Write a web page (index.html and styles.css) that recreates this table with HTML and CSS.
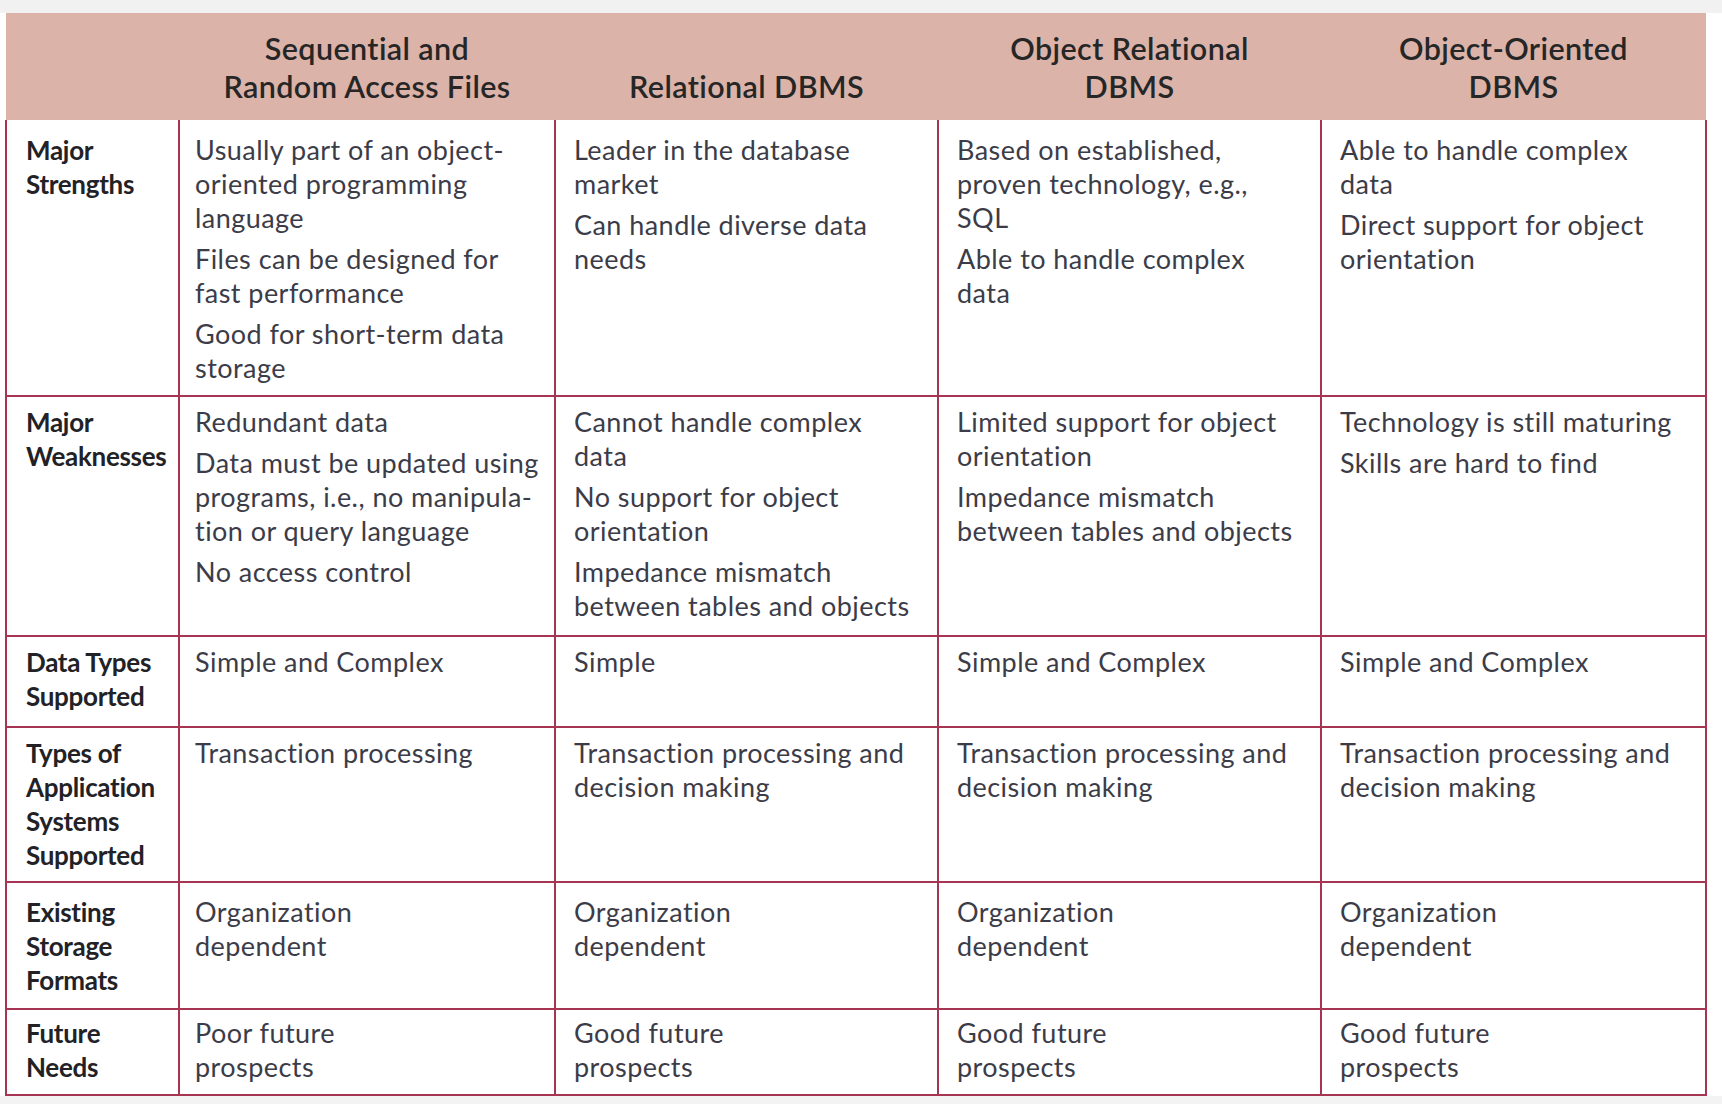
FILE: index.html
```html
<!DOCTYPE html>
<html lang="en">
<head>
<meta charset="utf-8">
<title>Comparison of File and DBMS Types</title>
<link rel="stylesheet" href="styles.css">
</head>
<body>
<div class="topstrip"></div>
<div class="wrap">
<table class="cmp">
  <colgroup>
    <col class="c-label">
    <col class="c-seq">
    <col class="c-rel">
    <col class="c-orel">
    <col class="c-oo">
  </colgroup>
  <thead>
    <tr class="r-head">
      <th></th>
      <th>Sequential and<br>Random Access Files</th>
      <th>Relational DBMS</th>
      <th>Object Relational<br>DBMS</th>
      <th>Object-Oriented<br>DBMS</th>
    </tr>
  </thead>
  <tbody>
    <tr class="r-str">
      <th>Major<br>Strengths</th>
      <td class="first"><p>Usually part of an object-<br>oriented programming<br>language</p><p>Files can be designed for<br>fast performance</p><p>Good for short-term data<br>storage</p></td>
      <td><p>Leader in the database<br>market</p><p>Can handle diverse data<br>needs</p></td>
      <td><p>Based on established,<br>proven technology, e.g.,<br>SQL</p><p>Able to handle complex<br>data</p></td>
      <td><p>Able to handle complex<br>data</p><p>Direct support for object<br>orientation</p></td>
    </tr>
    <tr class="r-weak">
      <th>Major<br>Weaknesses</th>
      <td class="first"><p>Redundant data</p><p>Data must be updated using<br>programs, i.e., no manipula-<br>tion or query language</p><p>No access control</p></td>
      <td><p>Cannot handle complex<br>data</p><p>No support for object<br>orientation</p><p>Impedance mismatch<br>between tables and objects</p></td>
      <td><p>Limited support for object<br>orientation</p><p>Impedance mismatch<br>between tables and objects</p></td>
      <td><p>Technology is still maturing</p><p>Skills are hard to find</p></td>
    </tr>
    <tr class="r-types">
      <th>Data Types<br>Supported</th>
      <td class="first"><p>Simple and Complex</p></td>
      <td><p>Simple</p></td>
      <td><p>Simple and Complex</p></td>
      <td><p>Simple and Complex</p></td>
    </tr>
    <tr class="r-app">
      <th>Types of<br>Application<br>Systems<br>Supported</th>
      <td class="first"><p>Transaction processing</p></td>
      <td><p>Transaction processing and<br>decision making</p></td>
      <td><p>Transaction processing and<br>decision making</p></td>
      <td><p>Transaction processing and<br>decision making</p></td>
    </tr>
    <tr class="r-store">
      <th>Existing<br>Storage<br>Formats</th>
      <td class="first"><p>Organization<br>dependent</p></td>
      <td><p>Organization<br>dependent</p></td>
      <td><p>Organization<br>dependent</p></td>
      <td><p>Organization<br>dependent</p></td>
    </tr>
    <tr class="r-future">
      <th>Future<br>Needs</th>
      <td class="first"><p>Poor future<br>prospects</p></td>
      <td><p>Good future<br>prospects</p></td>
      <td><p>Good future<br>prospects</p></td>
      <td><p>Good future<br>prospects</p></td>
    </tr>
  </tbody>
</table>
</div>
<div class="bottomstrip"></div>
</body>
</html>
```

FILE: styles.css
```css
html, body {
  margin: 0;
  padding: 0;
  background: #ffffff;
}

body {
  width: 1722px;
  height: 1104px;
  overflow: hidden;
  display: flex;
  flex-direction: column;
  font-family: Lato, "Open Sans", "Liberation Sans", sans-serif;
  color: #3c3c48;
}

.topstrip {
  height: 13px;
  background: #f1f1f1;
  flex: none;
}

.wrap {
  padding-left: 5px;
  flex: none;
}

.bottomstrip {
  flex: 1;
  background: #f3f3f3;
}

.cmp {
  border-collapse: collapse;
  table-layout: fixed;
  width: 1700px;
}

.c-label { width: 173px; }
.c-seq { width: 376px; }
.c-rel { width: 383px; }
.c-orel { width: 383px; }
.c-oo { width: 385px; }

.r-head { height: 107px; }

.r-head th {
  background: #dbb3a9;
  padding: 0 0 15px 0;
  vertical-align: bottom;
  text-align: center;
  font-size: 30.5px;
  line-height: 38px;
  font-weight: 600;
  color: #262626;
  letter-spacing: 0.4px;
  border: none;
}

tbody th,
tbody td {
  border: 2px solid #a53552;
  border-top: none;
  vertical-align: top;
  text-align: left;
  padding-bottom: 0;
}

tbody th {
  padding: 8px 2px 0 19px;
  font-size: 26px;
  line-height: 34px;
  font-weight: 700;
  color: #222226;
  letter-spacing: -0.3px;
}

tbody td {
  padding: 8px 4px 0 18px;
  font-size: 27px;
  line-height: 34px;
  font-weight: 400;
  letter-spacing: 0.45px;
  white-space: nowrap;
}

tbody td.first {
  padding-left: 15px;
}

tbody td p {
  margin: 0 0 7px 0;
}

tbody td p:last-child {
  margin-bottom: 0;
}

.r-str { height: 276px; }
.r-weak { height: 240px; }
.r-types { height: 91px; }
.r-app { height: 155px; }
.r-store { height: 127px; }
.r-future { height: 86px; }

.r-str th, .r-str td { padding-top: 13px; }
.r-weak th, .r-weak td { padding-top: 8px; }
.r-store th, .r-store td { padding-top: 12px; }
.r-future th, .r-future td { padding-top: 6px; }
```
